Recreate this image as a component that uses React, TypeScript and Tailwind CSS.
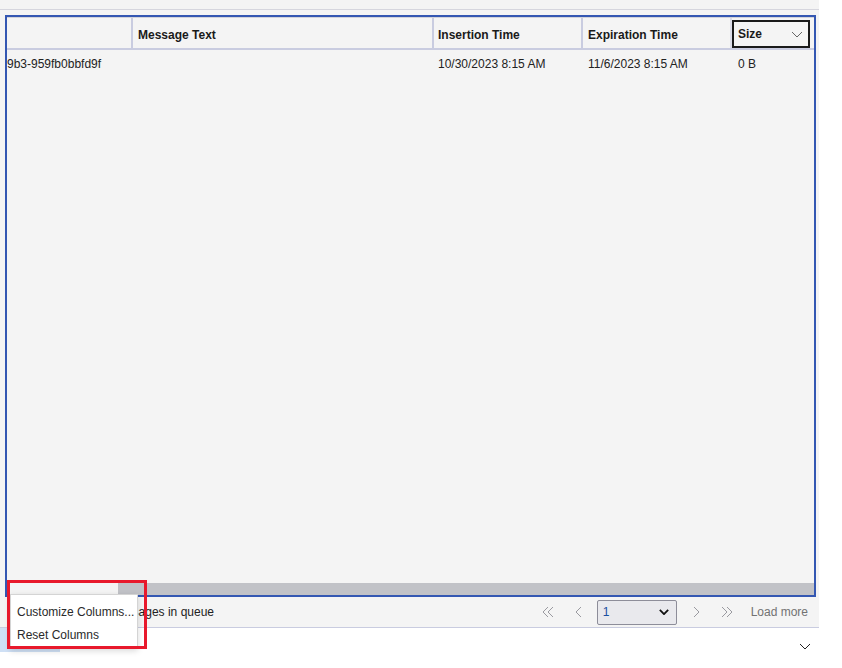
import React from 'react';

// Queue message grid with an open column context menu

const font = { fontFamily: '"Liberation Sans", Arial, sans-serif' };

function DoubleLeft() {
  return (
    <svg width="14" height="12" viewBox="0 0 14 12" fill="none" stroke="#9a9aa0" strokeWidth="1">
      <polyline points="7,1 2,6 7,11" />
      <polyline points="12,1 7,6 12,11" />
    </svg>
  );
}

function DoubleRight() {
  return (
    <svg width="14" height="12" viewBox="0 0 14 12" fill="none" stroke="#9a9aa0" strokeWidth="1">
      <polyline points="2,1 7,6 2,11" />
      <polyline points="7,1 12,6 7,11" />
    </svg>
  );
}

function Left() {
  return (
    <svg width="8" height="12" viewBox="0 0 8 12" fill="none" stroke="#9a9aa0" strokeWidth="1">
      <polyline points="6,1 1,6 6,11" />
    </svg>
  );
}

function Right() {
  return (
    <svg width="8" height="12" viewBox="0 0 8 12" fill="none" stroke="#9a9aa0" strokeWidth="1">
      <polyline points="2,1 7,6 2,11" />
    </svg>
  );
}

function ChevronDown({ color = '#555', w = 12, sw = 1 }: { color?: string; w?: number; sw?: number }) {
  return (
    <svg width={w} height={w / 2 + 1} viewBox="0 0 12 7" fill="none" stroke={color} strokeWidth={sw}>
      <polyline points="1,1 6,6 11,1" />
    </svg>
  );
}

export default function App() {
  return (
    <div className="relative w-[842px] h-[668px] bg-white overflow-hidden text-[12px] text-[#1f1f1f]" style={font}>
      <div className="w-[819px] bg-[#f4f4f4] flex flex-col">
        {/* top strip */}
        <div className="h-[9px]" />
        <div className="h-px bg-[#d6d6de]" />
        <div className="h-[5px]" />

        {/* grid */}
        <div className="ml-[5px] w-[811px] h-[582px] border-2 border-[#3457b2] flex flex-col">
          <div className="h-px bg-[#d2d3da]" />
          <div className="flex h-[32px] border-b-2 border-[#c9cce0] font-bold text-[#1a1a1a]">
            <div className="w-[126px] border-r-2 border-[#c9cce0]" />
            <div className="w-[301px] border-r-2 border-[#c9cce0] flex items-center pl-[5px] pt-[4px]">Message Text</div>
            <div className="w-[149px] border-r-2 border-[#c9cce0] flex items-center pl-[4px] pt-[4px]">Insertion Time</div>
            <div className="w-[147px] flex items-center pl-[5px] pt-[4px]">Expiration Time</div>
            <div className="w-[2px] bg-[#dcdde8]" />
            <div className="w-[78px] h-[28px] mt-[2px] border-2 border-[#1a1a1a] flex items-center justify-between pl-[4px] pr-[5px]">
              <span>Size</span>
              <ChevronDown color="#666" />
            </div>
          </div>
          <div className="flex h-[28px] items-center text-[#222]">
            <div className="w-[126px] overflow-hidden whitespace-nowrap">9b3-959fb0bbfd9f</div>
            <div className="w-[301px]" />
            <div className="w-[149px] pl-[4px]">10/30/2023 8:15 AM</div>
            <div className="w-[149px] pl-[5px]">11/6/2023 8:15 AM</div>
            <div className="pl-[6px]">0 B</div>
          </div>
          <div className="flex-1" />
          {/* horizontal scrollbar */}
          <div className="h-[12px] flex">
            <div className="w-[111px]" />
            <div className="flex-1 bg-[#c1c2c7]" />
          </div>
        </div>

        {/* footer */}
        <div className="h-[30px] flex items-center">
          <div className="w-[214px] flex justify-end whitespace-nowrap text-[#222]">
            <span className="shrink-0">Showing 1 of 1 messages in queue</span>
          </div>
          <div className="flex-1" />
          <div className="flex items-center">
            <DoubleLeft />
            <div className="w-[20px]" />
            <Left />
            <div className="w-[14px]" />
            <div className="w-[80px] h-[25px] border border-[#8d8d99] bg-[#e9e9ed] rounded-[2px] flex items-center justify-between pl-[5px] pr-[7px]">
              <span className="text-[#1b4fa0]">1</span>
              <ChevronDown color="#111" w={10} sw={2.2} />
            </div>
            <div className="w-[15px]" />
            <Right />
            <div className="w-[20px]" />
            <DoubleRight />
            <div className="w-[17px]" />
            <span className="text-[#727272] mr-[11px]">Load more</span>
          </div>
        </div>
      </div>
      <div className="w-[819px] h-px bg-[#c9cce0]" />

      {/* bottom panel bar */}
      <div className="flex h-[24px] w-[819px]">
        <div className="w-[60px] bg-[#cfe0f5]" />
        <div className="flex-1" />
        <div className="pt-[15px] pr-[8px]">
          <ChevronDown color="#222" />
        </div>
      </div>

      {/* context menu */}
      <div className="absolute left-[10px] top-[594px] w-[128px] h-[55px] bg-white border border-[#d4d4d4] shadow-[0_2px_6px_rgba(0,0,0,0.15)] flex flex-col pt-[5px] text-[#2a2a2a]">
        <div className="h-[23px] flex items-center pl-[6px] whitespace-nowrap">Customize Columns...</div>
        <div className="h-[23px] flex items-center pl-[6px]">Reset Columns</div>
      </div>
      {/* highlight box */}
      <div className="absolute left-[7px] top-[580px] w-[140px] h-[69px] border-[3px] border-[#e8192c]" />
    </div>
  );
}
